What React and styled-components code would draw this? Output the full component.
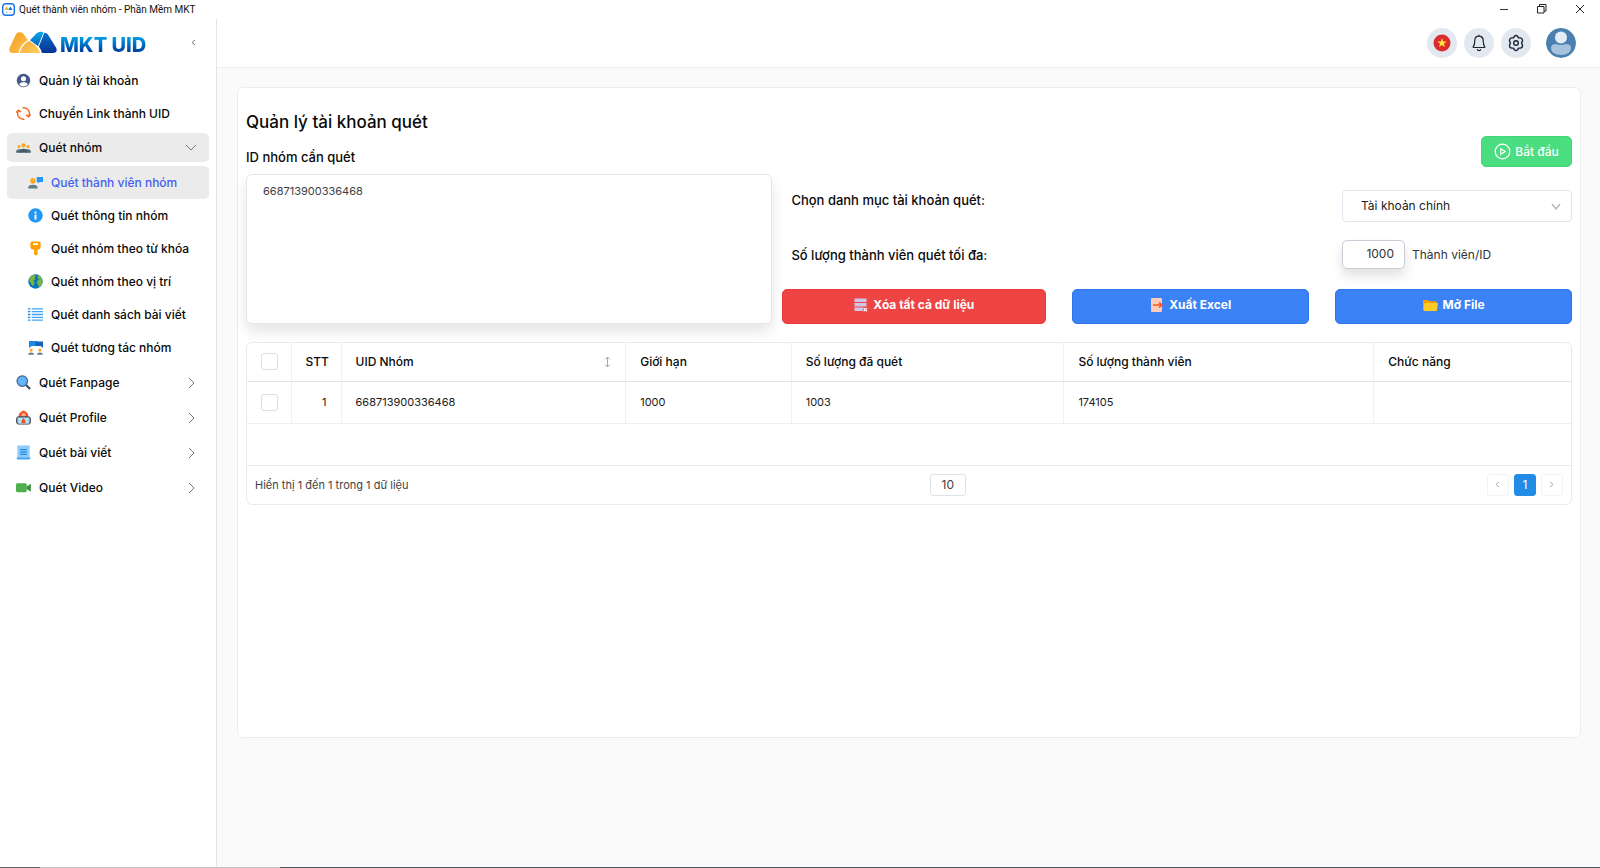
import React, { useState } from "react";
import styled, { createGlobalStyle, css } from "styled-components";

const GlobalStyle = createGlobalStyle`
  *, *::before, *::after { box-sizing: border-box; }
  body { margin: 0; background: #fafafa; color: #0e1726; font-family: Inter, "Liberation Sans", sans-serif; font-size: 12px; line-height: 18px; }
  button, input, select, textarea { font: inherit; color: inherit; margin: 0; }
  button { cursor: pointer; border: 0; background: none; padding: 0; }
  h1, ul, p { margin: 0; padding: 0; font: inherit; }
  ul { list-style: none; }
  a { color: inherit; text-decoration: none; }
  svg { display: block; flex: none; }
`;

const Window = styled.div`
  min-height: 100vh;
  display: flex;
  flex-direction: column;
`;

const TitleBar = styled.header`
  display: flex;
  align-items: center;
  height: 19px;
  padding: 0 14px 0 2px;
  background: #fff;
  color: #111;
  font-family: Roboto, "Noto Sans", sans-serif;
  font-size: 10px;
  gap: 4px;
`;

const WindowTitle = styled.span`
  flex: 1;
`;

const WindowButtons = styled.div`
  display: flex;
  gap: 26px;
`;

const WindowButton = styled.button`
  width: 12px;
  height: 18px;
  padding-bottom: 2px;
  display: grid;
  place-items: center;
`;

const Body = styled.div`
  flex: 1;
  display: flex;
`;

const BottomEdge = styled.div`
  height: 1px;
  background: linear-gradient(90deg, #666 40px, #c4c4c4 40px 280px, #4d5a5a 280px);
`;

const Sidebar = styled.nav`
  flex: none;
  width: 217px;
  padding: 0 7px;
  background: #fff;
  border-right: 1px solid #e4e4e7;
`;

const Brand = styled.div`
  display: flex;
  align-items: center;
  height: 43px;
  padding: 4px 10px 0 2px;
  gap: 3px;
`;

const BrandName = styled.span`
  flex: 1;
  font-weight: 800;
  font-size: 20px;
  line-height: 24px;
  padding-top: 4px;
  background: linear-gradient(#00a6ea 25%, #00379b 85%);
  background-clip: text;
  color: transparent;
`;

const CollapseButton = styled.button`
  width: 12px;
  height: 16px;
  display: grid;
  place-items: center;
`;

const NavList = styled.ul`
  display: flex;
  flex-direction: column;
  padding: 2px 0;
`;

const SubList = styled.ul`
  padding: 1px 0;
`;

const rowStyle = css`
  display: flex;
  align-items: center;
  width: 100%;
  gap: 8px;
  border-radius: 5px;
  font-weight: 500;
  color: #0a0a0a;
  text-align: left;
`;

const NavLink = styled.a`
  ${rowStyle}
  height: 33px;
  padding-left: ${(p) => (p.$nested ? 21 : 9)}px;
  ${(p) => p.$active && css`
    background: #ebebeb;
    color: #4361ee;
  `}
`;

const NavGroup = styled.button`
  ${rowStyle}
  height: 29px;
  margin: 3px 0;
  padding: 0 11px 0 9px;
  background: ${(p) => (p.$open ? "#ebebeb" : "transparent")};
`;

const NavLabel = styled.span`
  flex: 1;
`;

const ChevronSlot = styled.span`
  width: 14px;
  display: grid;
  place-items: center;
`;

const Main = styled.div`
  flex: 1;
  min-width: 0;
`;

const TopBar = styled.div`
  display: flex;
  align-items: center;
  justify-content: flex-end;
  gap: 7px;
  height: 49px;
  padding: 0 24px;
  background: #fff;
  border-bottom: 1px solid #f0f0f1;
`;

const RoundButton = styled.button`
  width: 30px;
  height: 30px;
  border-radius: 50%;
  display: grid;
  place-items: center;
  background: #e2e8f0;
  color: #1b2433;
`;

const AvatarButton = styled(RoundButton)`
  margin-left: 8px;
  overflow: hidden;
`;

const Card = styled.main`
  min-height: 75vh;
  margin: 19px 19px 0 20px;
  padding: 20px 8px;
  background: #fff;
  border: 1px solid #ebedf2;
  border-radius: 6px;
`;

const PageTitle = styled.h1`
  font-size: 17px;
  line-height: 28px;
  font-weight: 500;
  color: #0a0a0a;
`;

const FormHead = styled.div`
  display: flex;
  align-items: flex-end;
  justify-content: space-between;
  margin-bottom: 7px;
`;

const FieldLabel = styled.label`
  font-size: 13px;
  line-height: 20px;
  font-weight: 500;
  color: #0a0a0a;
`;

const ActionButton = styled.button`
  display: flex;
  align-items: center;
  justify-content: center;
  gap: 5px;
  height: 35px;
  padding-bottom: 4px;
  border-radius: 5px;
  border: 1px solid ${(p) => p.$edge};
  background: ${(p) => p.$fill};
  color: #fff;
  font-weight: 700;
`;

const StartButton = styled(ActionButton)`
  height: 31px;
  width: 91px;
  gap: 4px;
  padding-bottom: 0;
  font-weight: 500;
`;

const FormGrid = styled.div`
  display: grid;
  grid-template-columns: minmax(0, 2fr) minmax(0, 3fr);
  gap: 10px;
`;

const IdBox = styled.textarea`
  display: block;
  width: 100%;
  height: 150px;
  padding: 7px 16px;
  resize: none;
  border: 1px solid #e6e6e8;
  border-radius: 6px;
  background: #fff;
  color: #3b3f45;
  font-size: 11px;
  box-shadow: 0 8px 14px rgba(0, 0, 0, 0.1);
  outline: none;
`;

const Options = styled.div`
  display: flex;
  flex-direction: column;
  padding-top: 16px;
`;

const OptionRow = styled.div`
  display: flex;
  align-items: ${(p) => p.$align || "center"};
  justify-content: space-between;
  padding-left: 9px;
  margin-bottom: 18px;
`;

const OptionControl = styled.div`
  position: relative;
  display: flex;
  align-items: center;
  gap: 7px;
  width: 230px;
`;

const CategorySelect = styled.select`
  appearance: none;
  width: 100%;
  height: 32px;
  padding: 0 30px 0 18px;
  border: 1px solid #e0e6ed;
  border-radius: 4px;
  background: #fff;
  color: #222;
`;

const SelectArrow = styled.span`
  position: absolute;
  right: 10px;
  top: 13px;
  pointer-events: none;
`;

const LimitInput = styled.input`
  width: 63px;
  height: 29px;
  padding: 0 10px 2px;
  text-align: right;
  border: 1px solid #c9ced8;
  border-radius: 5px;
  background: #fff;
  color: #333;
  box-shadow: 0 7px 12px rgba(0, 0, 0, 0.12);
`;

const Unit = styled.span`
  font-size: 12px;
  color: #333;
`;

const Actions = styled.div`
  display: grid;
  grid-template-columns: 264fr 237fr 237fr;
  gap: 26px;
  margin-top: auto;
`;

const TablePanel = styled.section`
  margin-top: 18px;
  border: 1px solid #e9eaed;
  border-radius: 6px;
`;

const DataTable = styled.table`
  width: 100%;
  table-layout: fixed;
  border-collapse: collapse;
`;

const Cell = styled.td`
  height: 42px;
  padding: 0 14px;
  text-align: ${(p) => (p.$end ? "right" : "left")};
  border-bottom: 1px solid #f0f0f1;
  color: #1a1a1a;
  font-size: 11px;
  & + & { border-left: 1px solid #f0f0f1; }
`;

const HeadCell = styled.th`
  height: 38px;
  width: ${(p) => p.$w};
  padding: 0 14px;
  text-align: ${(p) => (p.$end ? "right" : "left")};
  font-weight: 500;
  color: #0a0a0a;
  border-bottom: 1px solid #e2e3e6;
  & + & { border-left: 1px solid #f0f0f1; }
`;

const SortHeader = styled.span`
  display: flex;
  align-items: center;
  justify-content: space-between;
`;

const Check = styled.input`
  appearance: none;
  display: block;
  width: 17px;
  height: 17px;
  border: 1px solid #d6dfea;
  border-radius: 3px;
  background: #fff;
  &:checked { background: #228be6; }
`;

const TableFooter = styled.div`
  display: flex;
  justify-content: space-between;
  align-items: center;
  margin-top: 41px;
  padding: 8px;
  border-top: 1px solid #e9eaed;
  color: #3f3f3f;
`;

const Summary = styled.p`
  font-size: 11px;
`;

const PageButton = styled.button`
  width: ${(p) => (p.$wide ? 36 : 22)}px;
  height: 22px;
  display: grid;
  place-items: center;
  border: 1px solid ${(p) => (p.$wide ? "#dee2e6" : "#f1f3f5")};
  border-radius: 3px;
  background: #fff;
  ${(p) => p.$active && css`
    background: #228be6;
    border-color: #228be6;
    color: #fff;
  `}
`;

const Pager = styled.div`
  display: flex;
  gap: 5px;
`;

function Chevron({ dir = "right", w = 6, h = 12, color = "#74777d", stroke = 1 }) {
  const d = {
    right: `M1 1L${w} ${h / 2}L1 ${h - 1}`,
    left: `M${w} 1L1 ${h / 2}L${w} ${h - 1}`,
    down: `M1 1L${w / 2} ${h - 1}L${w - 1} 1`,
  }[dir];
  return (
    <svg width={w + 1} height={h} fill="none" stroke={color} strokeWidth={stroke} aria-hidden="true">
      <path d={d} />
    </svg>
  );
}

const Icon = ({ size = 15, children }) => (
  <svg width={size} height={size} viewBox="0 0 16 16" aria-hidden="true">{children}</svg>
);

const AppIcon = () => (
  <svg width="13" height="13" viewBox="0 0 13 13" aria-hidden="true">
    <rect x=".7" y=".7" width="11.6" height="11.6" rx="3" fill="#fff" stroke="#1672e8" strokeWidth="1.4" />
    <path d="M2.4 7L4.6 3.6L6.5 5.6L5.8 7Z" fill="#f9b233" />
    <path d="M6.2 7L8.3 3.4L10.6 7Z" fill="#1479d8" />
    <path d="M4 9h1.6M7.5 9h1.6" stroke="#9bbce6" strokeWidth="1" />
  </svg>
);

const LogoMark = () => (
  <svg width="48" height="24" viewBox="0 0 48 24" aria-hidden="true">
    <defs>
      <linearGradient id="gold" x1="0" y1="0" x2="1" y2="1"><stop offset="0" stopColor="#f39a1e" /><stop offset="1" stopColor="#ffc64f" /></linearGradient>
      <linearGradient id="gold2" x1="0" y1="0" x2="1" y2="1"><stop offset="0" stopColor="#f7a62c" /><stop offset="1" stopColor="#ffcf66" /></linearGradient>
      <linearGradient id="sky" x1="0" y1="0" x2="0" y2="1"><stop offset="0" stopColor="#0aa5ea" /><stop offset="1" stopColor="#0667bd" /></linearGradient>
      <linearGradient id="navy" x1="0" y1="0" x2="0" y2="1"><stop offset="0" stopColor="#0b70c9" /><stop offset="1" stopColor="#043294" /></linearGradient>
    </defs>
    <path d="M7 3.200C8.500 .8 12.500 .600 14.500 3L19 9.200C14.500 11.500 11 15.500 9.500 22H3.500C.3 22 -.600 19 1 16Z" fill="url(#gold)" />
    <path d="M20 10C25 12.500 29.500 17 31.500 22H10.800C12 16.500 15.500 12.500 20 10Z" fill="url(#gold2)" />
    <path d="M26.500 3.500C28.500 .600 32 .100 34.500 1.400L29 15.200L21 9.200Z" fill="url(#sky)" />
    <path d="M35.300 1.700C37 1.700 38.300 2.600 39.200 4L47 16.500C48.800 19.800 47 22 44 22H33C32.300 19.500 31.300 17.500 29.800 15.800Z" fill="url(#navy)" />
  </svg>
);

const icons = {
  account: <Icon><circle cx="8" cy="8" r="7.200" fill="#465a8a" /><circle cx="8" cy="6.200" r="2.700" fill="#fff" /><path d="M3.400 12.600C4 10.200 6 9.900 8 9.900s4 .3 4.600 2.700A6.500 6.500 0 0 1 8 14.400a6.500 6.500 0 0 1-4.600-1.800Z" fill="#fff" /></Icon>,
  convert: <Icon><g fill="none" stroke="#f4681d" strokeWidth="1.500"><path d="M7 1.900A6.200 6.200 0 0 1 13.500 11M9 14.100A6.200 6.200 0 0 1 2.500 5" /><path d="M15.800 9L13.300 11.500L10.700 9.500M.2 7L2.700 4.500L5.300 6.500" /></g></Icon>,
  group: <Icon><g fill="#ffa726"><circle cx="3.200" cy="7" r="1.700" /><circle cx="12.800" cy="7" r="1.700" /><circle cx="8" cy="5.700" r="2.200" /></g><path d="M0 13.500C0 10.800 1.300 9.800 3.200 9.800s2 .3 2.300.8L5 13.500ZM16 13.500c0-2.700-1.300-3.700-3.200-3.700s-2 .3-2.300.8l.5 2.900Z" fill="#546e7a" /><path d="M3.500 13.500C3.500 10.200 5.500 9.200 8 9.200s4.500 1 4.500 4.300Z" fill="#455a64" /></Icon>,
  member: <Icon><circle cx="5.200" cy="6.200" r="3" fill="#ffa726" /><path d="M0 14.500C0 11.500 2 10.400 5.200 10.400s5.200 1.100 5.200 4.100Z" fill="#607d8b" /><path d="M9.300 2h6.700v5.500h-3.500L10.500 9V7.500H9.300Z" fill="#2196f3" /></Icon>,
  info: <Icon><circle cx="8" cy="8" r="7.700" fill="#2196f3" /><path d="M7 7h2v5.200H7ZM7 3.800h2v2H7Z" fill="#fff" /></Icon>,
  key: <Icon><path fillRule="evenodd" d="M4.500.5h7q2 0 2 2v3.500q0 3-3.300 3.400V14L8.500 15.800L6.500 14V9.400Q2.500 9 2.500 6V2.500Q2.500.5 4.500.5ZM5.500 2.500v1.700h5V2.500Z" fill="#ffa000" /></Icon>,
  globe: <Icon><circle cx="8" cy="8" r="7.700" fill="#0277bd" /><path d="M5 1C8 .5 8.500 2 7 3.500C8.500 5.500 7.500 6.500 5.500 7.500C8 9 7 11 5.500 12.500C4 13 3.500 9.500 2 8.500C.3 6 2 2.500 5 1ZM10.500 1.300C13 2 15.500 4.500 15.600 8C15.500 11 13.500 13.500 12 14C10.500 12 11 11 9.500 9.500C9 7 11 6.500 12.500 6.500C11 5.500 9.500 4 10.500 1.300Z" fill="#7cb342" /></Icon>,
  list: <Icon><path d="M4 2h12M4 5h12M4 8h12M4 11h12M4 14h12" stroke="#42a5f5" strokeWidth="1.400" /><path d="M0 2h2.500M0 5h2.500M0 8h2.500M0 11h2.500M0 14h2.500" stroke="#1e88e5" strokeWidth="1.400" /></Icon>,
  interact: <Icon><path d="M1 1h9v5.500H4L1 8.500Z" fill="#1e88e5" /><path d="M8 1.500h8v7l-2.500-2H8Z" fill="#1565c0" /><circle cx="3.300" cy="10.700" r="1.700" fill="#ffa726" /><circle cx="12.700" cy="10.700" r="1.700" fill="#ffa726" /><path d="M.3 15.600q0-2.400 3-2.400t3 2.400ZM9.700 15.600q0-2.400 3-2.400t3 2.400Z" fill="#607d8b" /></Icon>,
  search: <Icon><path d="M10.500 10.500L15 15" stroke="#37474f" strokeWidth="2.200" /><circle cx="6.700" cy="6.500" r="5.600" fill="#64b5f6" stroke="#42608c" strokeWidth="1.300" /></Icon>,
  profile: <Icon><path d="M3 7.500Q2 3 8 .5Q14 3 13 7.500Z" fill="#f4511e" /><circle cx="8" cy="5.500" r="2.300" fill="#ffab91" /><rect x=".6" y="7.200" width="14.800" height="7.800" rx="2" fill="#90a4ae" stroke="#37474f" /><rect x="2.500" y="8.500" width="11" height="6" fill="#b3e5fc" /><path d="M8 8.500q3 3 2 5.500H6q-1-2.500 2-5.500Z" fill="#f4511e" /></Icon>,
  post: <Icon><path d="M1.500.5h13v12.500h-13Z" fill="#90caf9" /><path d="M.8 13h14.400v1.500q0 1-1 1H1.800q-1 0-1-1Z" fill="#42a5f5" /><path d="M4.500 5h7M4.500 7.500h7M4.500 10h7" stroke="#1e88e5" strokeWidth="1.300" /></Icon>,
  video: <Icon><rect x="0" y="3.500" width="11.500" height="9.500" rx="1.500" fill="#4caf50" /><path d="M11.500 7L15.800 4v8.500L11.500 9.500Z" fill="#388e3c" /></Icon>,
};

const subItems = [
  ["member", "Quét thành viên nhóm"],
  ["info", "Quét thông tin nhóm"],
  ["key", "Quét nhóm theo từ khóa"],
  ["globe", "Quét nhóm theo vị trí"],
  ["list", "Quét danh sách bài viết"],
  ["interact", "Quét tương tác nhóm"],
];

const groups = [
  ["search", "Quét Fanpage"],
  ["profile", "Quét Profile"],
  ["post", "Quét bài viết"],
  ["video", "Quét Video"],
];

const columns = [
  { label: "STT", width: "50px", end: true },
  { label: "UID Nhóm", width: "21.5%", sortable: true },
  { label: "Giới hạn", width: "12.5%" },
  { label: "Số lượng đã quét", width: "20.6%" },
  { label: "Số lượng thành viên", width: "23.4%" },
  { label: "Chức năng" },
];

const FlagIcon = () => (
  <svg width="18" height="18" viewBox="0 0 18 18" aria-hidden="true">
    <circle cx="9" cy="9" r="8.500" fill="#dc2b2f" />
    <path d="M9 4l1.200 3.500h3.600l-2.900 2.200 1.100 3.500L9 11.100l-3 2.100 1.100-3.500-2.900-2.200h3.600Z" fill="#ffe63b" />
  </svg>
);

const BellIcon = () => (
  <svg width="18" height="18" viewBox="0 0 18 18" fill="none" stroke="currentColor" strokeWidth="1.200" aria-hidden="true">
    <path d="M9 2.200c2.700 0 4.200 2 4.200 4.300 0 3.600.6 5.200 1.600 6.400.2.300 0 .6-.3.600h-11c-.3 0-.5-.3-.3-.6 1-1.200 1.600-2.800 1.600-6.400C4.800 4.200 6.300 2.200 9 2.200ZM9 .8v1.400M7.200 15.300c.3.900 1 1.300 1.800 1.300s1.500-.4 1.800-1.300" />
  </svg>
);

const GearIcon = () => (
  <svg width="18" height="18" viewBox="0 0 18 18" fill="none" stroke="currentColor" strokeWidth="1.400" strokeLinejoin="round" aria-hidden="true">
    <circle cx="9" cy="9" r="2.300" />
    <path d="M7.400 2.200Q9 .8 10.600 2.200L11.500 3.900L13.500 3.900Q15.600 4.500 15.600 6.600L14.600 9L15.600 11.400Q15.600 13.500 13.500 14.100L11.500 14.100L10.600 15.800Q9 17.200 7.400 15.800L6.500 14.100L4.500 14.100Q2.400 13.500 2.400 11.400L3.400 9L2.400 6.600Q2.400 4.500 4.500 3.900L6.500 3.900Z" />
  </svg>
);

const AvatarIcon = () => (
  <svg width="30" height="30" viewBox="0 0 30 30" aria-hidden="true">
    <circle cx="15" cy="15" r="15" fill="#4a80b0" />
    <circle cx="15" cy="9.500" r="6" fill="#e4edf5" />
    <path d="M5 20q0-4 5-4q5 2.200 10 0q5 0 5 4q0 3-2.500 5q-3 2-7.500 2t-7.500-2Q5 23 5 20Z" fill="#a5c3dc" />
  </svg>
);

const PlayIcon = () => (
  <svg width="17" height="17" viewBox="0 0 17 17" fill="none" stroke="#fff" strokeWidth="1.300" strokeLinejoin="round" aria-hidden="true">
    <circle cx="8.500" cy="8.500" r="7.300" /><path d="M6.700 5.700L11.300 8.500L6.700 11.300Z" />
  </svg>
);

const ClearIcon = () => (
  <svg width="14" height="14" viewBox="0 0 14 14" aria-hidden="true">
    <path d="M.5 .5h12v3.500H.5ZM.5 5h12v3.500H.5ZM.5 9.500H9V13H.5Z" fill="#d1c4e9" />
    <path d="M9.600 10l3.400 3.400M13 10l-3.400 3.400" stroke="#fff" strokeWidth="1.200" />
  </svg>
);

const ExportIcon = () => (
  <svg width="14" height="14" viewBox="0 0 14 14" aria-hidden="true">
    <rect x="1" y="0" width="11" height="14" rx="1" fill="#ffccbc" />
    <path d="M3 7h8M9 4.300L12 7L9 9.700" fill="none" stroke="#ff5722" strokeWidth="1.600" />
  </svg>
);

const FolderIcon = () => (
  <svg width="15" height="14" viewBox="0 0 15 14" aria-hidden="true">
    <path d="M0 3q0-1 1-1h4l1.500 1.300H12.500q1 0 1 1V12H1Q0 12 0 11Z" fill="#ffa000" />
    <path d="M2.500 5H14q1 0 .9 1L14 12q-.1 1-1 1H1.500q-1 0-.9-1L1.500 6q.1-1 1-1Z" fill="#ffca28" />
  </svg>
);

const SortIcon = () => (
  <svg width="7" height="12" viewBox="0 0 7 12" fill="none" stroke="#a5abb3" aria-hidden="true">
    <path d="M3.500 1v10M1 3.500L3.500 1L6 3.500M1 8.500L3.500 11L6 8.500" />
  </svg>
);

export default function App() {
  const [open, setOpen] = useState(true);
  return (
    <>
      <GlobalStyle />
      <Window>
        <TitleBar>
          <AppIcon />
          <WindowTitle>Quét thành viên nhóm - Phần Mềm MKT</WindowTitle>
          <WindowButtons>
            <WindowButton aria-label="Thu nhỏ"><svg width="10" height="10"><path d="M1 5.500h8" stroke="#333" /></svg></WindowButton>
            <WindowButton aria-label="Khôi phục"><svg width="10" height="10" fill="none" stroke="#222"><path d="M.5 2.500h6.500v6.500H.5ZM2.500 2.500V.5h6.500v6.500H7" /></svg></WindowButton>
            <WindowButton aria-label="Đóng"><svg width="10" height="10" stroke="#222"><path d="M1 1l8 8M9 1L1 9" /></svg></WindowButton>
          </WindowButtons>
        </TitleBar>
        <Body>
          <Sidebar>
            <Brand>
              <LogoMark />
              <BrandName>MKT UID</BrandName>
              <CollapseButton aria-label="Thu gọn"><Chevron dir="left" w={4} h={7} /></CollapseButton>
            </Brand>
            <NavList>
              <li><NavLink href="#accounts">{icons.account}<NavLabel>Quản lý tài khoản</NavLabel></NavLink></li>
              <li><NavLink href="#convert">{icons.convert}<NavLabel>Chuyển Link thành UID</NavLabel></NavLink></li>
              <li>
                <NavGroup $open={open} aria-expanded={open} onClick={() => setOpen(!open)}>
                  {icons.group}<NavLabel>Quét nhóm</NavLabel><ChevronSlot><Chevron dir="down" w={12} h={7} /></ChevronSlot>
                </NavGroup>
                {open && (
                  <SubList>
                    {subItems.map(([icon, label], i) => (
                      <li key={icon}>
                        <NavLink href={`#${icon}`} $nested $active={i === 0}>{icons[icon]}<NavLabel>{label}</NavLabel></NavLink>
                      </li>
                    ))}
                  </SubList>
                )}
              </li>
              {groups.map(([icon, label]) => (
                <li key={icon}>
                  <NavGroup aria-expanded={false}>
                    {icons[icon]}<NavLabel>{label}</NavLabel><ChevronSlot><Chevron w={6} h={12} /></ChevronSlot>
                  </NavGroup>
                </li>
              ))}
            </NavList>
          </Sidebar>
          <Main>
            <TopBar>
              <RoundButton aria-label="Ngôn ngữ"><FlagIcon /></RoundButton>
              <RoundButton aria-label="Thông báo"><BellIcon /></RoundButton>
              <RoundButton aria-label="Cài đặt"><GearIcon /></RoundButton>
              <AvatarButton aria-label="Hồ sơ"><AvatarIcon /></AvatarButton>
            </TopBar>
            <Card>
              <PageTitle>Quản lý tài khoản quét</PageTitle>
              <FormHead>
                <FieldLabel htmlFor="ids">ID nhóm cần quét</FieldLabel>
                <StartButton $fill="#4ade80" $edge="#44d67a"><PlayIcon />Bắt đầu</StartButton>
              </FormHead>
              <FormGrid>
                <IdBox id="ids" defaultValue="668713900336468" spellCheck={false} />
                <Options>
                  <OptionRow $align="flex-start">
                    <FieldLabel htmlFor="category">Chọn danh mục tài khoản quét:</FieldLabel>
                    <OptionControl>
                      <CategorySelect id="category"><option>Tài khoản chính</option></CategorySelect>
                      <SelectArrow><Chevron dir="down" w={10} h={7} color="#b5b9c0" stroke={1.5} /></SelectArrow>
                    </OptionControl>
                  </OptionRow>
                  <OptionRow>
                    <FieldLabel htmlFor="limit">Số lượng thành viên quét tối đa:</FieldLabel>
                    <OptionControl>
                      <LimitInput id="limit" defaultValue="1000" />
                      <Unit>Thành viên/ID</Unit>
                    </OptionControl>
                  </OptionRow>
                  <Actions>
                    <ActionButton $fill="#ef4444" $edge="#e93c3c"><ClearIcon />Xóa tất cả dữ liệu</ActionButton>
                    <ActionButton $fill="#3b82f6" $edge="#2f76ee"><ExportIcon />Xuất Excel</ActionButton>
                    <ActionButton $fill="#3b82f6" $edge="#2f76ee"><FolderIcon />Mở File</ActionButton>
                  </Actions>
                </Options>
              </FormGrid>
              <TablePanel>
                <DataTable>
                  <thead>
                    <tr>
                      <HeadCell $w="44px"><Check type="checkbox" aria-label="Chọn tất cả" /></HeadCell>
                      {columns.map((c) => (
                        <HeadCell key={c.label} $w={c.width} $end={c.end}>
                          {c.sortable ? <SortHeader>{c.label}<SortIcon /></SortHeader> : c.label}
                        </HeadCell>
                      ))}
                    </tr>
                  </thead>
                  <tbody>
                    <tr>
                      <Cell><Check type="checkbox" aria-label="Chọn dòng 1" /></Cell>
                      <Cell $end>1</Cell>
                      <Cell>668713900336468</Cell>
                      <Cell>1000</Cell>
                      <Cell>1003</Cell>
                      <Cell>174105</Cell>
                      <Cell />
                    </tr>
                  </tbody>
                </DataTable>
                <TableFooter>
                  <Summary>Hiển thị 1 đến 1 trong 1 dữ liệu</Summary>
                  <PageButton $wide aria-label="Số dòng mỗi trang">10</PageButton>
                  <Pager>
                    <PageButton aria-label="Trang trước"><Chevron dir="left" w={4} h={7} color="#a8adb3" /></PageButton>
                    <PageButton $active>1</PageButton>
                    <PageButton aria-label="Trang sau"><Chevron w={4} h={7} color="#a8adb3" /></PageButton>
                  </Pager>
                </TableFooter>
              </TablePanel>
            </Card>
          </Main>
        </Body>
        <BottomEdge />
      </Window>
    </>
  );
}
